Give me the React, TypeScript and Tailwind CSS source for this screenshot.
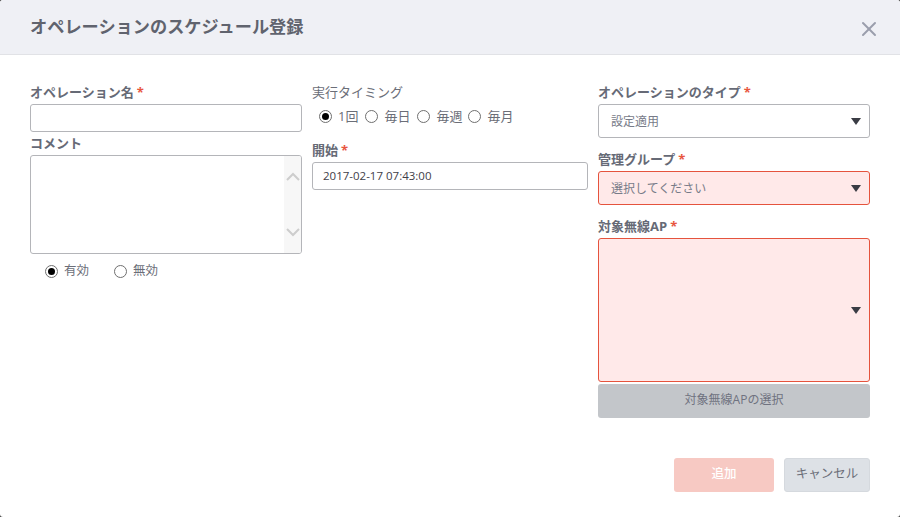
import { X } from "lucide-react"

const fontStack = "font-['Open_Sans','Noto_Sans_CJK_JP',sans-serif]"

function Req() {
  return <span className="ml-[3px] font-bold text-[#e8563f]">*</span>
}

function Label({ text, required }: { text: string; required?: boolean }) {
  return (
    <div className="h-[18px] text-[13px] leading-[18px] font-bold whitespace-nowrap text-[#666a76]">
      {text}
      {required && <Req />}
    </div>
  )
}

function Radio({ label, checked, className }: { label: string; checked?: boolean; className?: string }) {
  return (
    <label className={`flex items-center gap-[6px] leading-[18px] whitespace-nowrap text-[#6b6e78] ${className ?? ""}`}>
      <span className="flex h-[13px] w-[13px] items-center justify-center rounded-full border border-[#6f6f6f] bg-white">
        {checked && <span className="h-[7px] w-[7px] rounded-full bg-black" />}
      </span>
      <span>{label}</span>
    </label>
  )
}

function Arrow() {
  return (
    <svg width="10" height="7" viewBox="0 0 10 7" className="mt-[1px] shrink-0">
      <path d="M0 0H10L5 7Z" fill="#3a3c44" />
    </svg>
  )
}

function Select({ text, error, tall }: { text?: string; error?: boolean; tall?: boolean }) {
  return (
    <div
      className={`flex items-center justify-between rounded-[3px] border pr-[8px] pl-[12px] text-[12px] text-[#777b88] ${tall ? "h-[144px]" : "h-[34px]"} ${
        error ? "border-[#e5533d] bg-[#ffe9e9]" : "border-[#b4b5b9] bg-white"
      }`}
    >
      <span className="pt-[2px]">{text}</span>
      <Arrow />
    </div>
  )
}

export default function App() {
  return (
    <div className={`h-[517px] w-[900px] overflow-hidden bg-[#444] ${fontStack}`}>
      <div className="flex h-full flex-col overflow-hidden rounded-[3px] bg-white">
        <header className="flex h-[55px] shrink-0 items-center justify-between border-b border-[#e1e2e6] bg-[#eff0f5] pr-[19px] pl-[30px]">
          <h1 className="text-[17.2px] font-bold text-[#60636e]">オペレーションのスケジュール登録</h1>
          <X size={24} strokeWidth={2} className="mt-[4px] text-[#9a9eac]" />
        </header>

        <div className="flex gap-[10px] pt-[28px] pl-[30px]">
          {/* left column */}
          <div className="w-[272px]">
            <Label text="オペレーション名" required />
            <input className="mt-[3px] block h-[28px] w-full rounded-[3px] border border-[#b4b5b9] bg-white" />
            <div className="mt-[2px]">
              <Label text="コメント" />
            </div>
            <div className="mt-[3px] flex h-[99px] justify-end overflow-hidden rounded-[3px] border border-[#b4b5b9] bg-white">
              <div className="flex w-[17px] flex-col items-center justify-between bg-[#f7f7f7] pt-[16px] pb-[16px]">
                <svg width="14" height="9" viewBox="0 0 14 9">
                  <path d="M1 8L7 2L13 8" fill="none" stroke="#cdcdcd" strokeWidth="2" />
                </svg>
                <svg width="14" height="9" viewBox="0 0 14 9">
                  <path d="M1 1L7 7L13 1" fill="none" stroke="#cdcdcd" strokeWidth="2" />
                </svg>
              </div>
            </div>
            <div className="mt-[8px] flex pl-[15px] text-[12.5px]">
              <Radio label="有効" checked className="gap-[5px]" />
              <Radio label="無効" className="ml-[25px] gap-[4px]" />
            </div>
          </div>

          {/* middle column */}
          <div className="w-[276px]">
            <div className="h-[18px] text-[13px] leading-[18px] text-[#6b6e78]">実行タイミング</div>
            <div className="mt-[6px] flex pl-[7px] text-[13px]">
              <Radio label="1回" checked />
              <Radio label="毎日" className="ml-[7px]" />
              <Radio label="毎週" className="ml-[7px]" />
              <Radio label="毎月" className="ml-[6px]" />
            </div>
            <div className="mt-[16px]">
              <Label text="開始" required />
            </div>
            <div className="mt-[3px] flex h-[28px] items-center rounded-[3px] border border-[#b4b5b9] bg-white pl-[10px] text-[11.5px] text-[#3f4048]">
              2017-02-17 07:43:00
            </div>
          </div>

          {/* right column */}
          <div className="w-[272px]">
            <Label text="オペレーションのタイプ" required />
            <div className="mt-[3px]">
              <Select text="設定適用" />
            </div>
            <div className="mt-[12px]">
              <Label text="管理グループ" required />
            </div>
            <div className="mt-[3px]">
              <Select text="選択してください" error />
            </div>
            <div className="mt-[12px]">
              <Label text="対象無線AP" required />
            </div>
            <div className="mt-[3px]">
              <Select error tall />
            </div>
            <button className="mt-[2px] block h-[34px] w-full rounded-[3px] bg-[#c3c6ca] pb-[2px] text-[12px] text-[#6f7280]">
              対象無線APの選択
            </button>
          </div>
        </div>

        <div className="mt-[40px] flex justify-end gap-[10px] pr-[30px]">
          <button className="h-[34px] w-[100px] rounded-[3px] bg-[#f7c9c3] pb-[2px] text-[12.5px] font-medium text-white">追加</button>
          <button className="h-[34px] w-[86px] rounded-[3px] border border-[#d5d9de] bg-[#dde1e6] pb-[2px] text-[12.5px] text-[#6b6e78]">
            キャンセル
          </button>
        </div>
      </div>
    </div>
  )
}
